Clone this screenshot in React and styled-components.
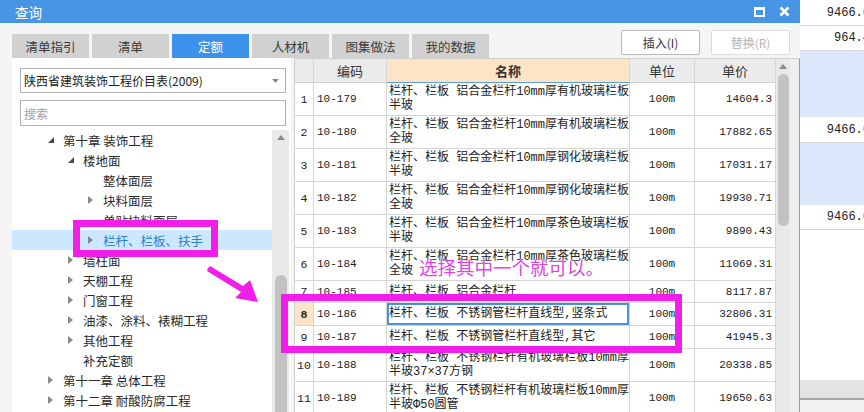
import React from 'react';
import styled, { createGlobalStyle, css } from 'styled-components';

const GlobalStyle = createGlobalStyle`
  html, body {
    margin: 0;
    padding: 0;
    overflow: hidden;
    background: #ffffff;
  }
  body {
    font-family: "Noto Sans CJK SC", "Liberation Sans", sans-serif;
  }
`;

const CJK = `"Noto Sans CJK SC", "Liberation Sans", sans-serif`;
const MONO = `"Liberation Mono", "Noto Sans CJK SC", monospace`;
const MAGENTA = '#f01ee8';

// 数据
const TREE = [
  { level: 0, label: '第十章 装饰工程', toggle: 'open' },
  { level: 1, label: '楼地面', toggle: 'open' },
  { level: 2, label: '整体面层' },
  { level: 2, label: '块料面层', toggle: 'closed' },
  { level: 2, label: '单贴块料面层' },
  { level: 2, label: '栏杆、栏板、扶手', toggle: 'closed', selected: true },
  { level: 1, label: '墙柱面', toggle: 'closed' },
  { level: 1, label: '天棚工程', toggle: 'closed' },
  { level: 1, label: '门窗工程', toggle: 'closed' },
  { level: 1, label: '油漆、涂料、裱糊工程', toggle: 'closed' },
  { level: 1, label: '其他工程', toggle: 'closed' },
  { level: 1, label: '补充定额' },
  { level: 0, label: '第十一章 总体工程', toggle: 'closed' },
  { level: 0, label: '第十二章 耐酸防腐工程', toggle: 'closed' },
];

const ROWS = [
  { code: '10-179', name: ['栏杆、栏板 铝合金栏杆10mm厚有机玻璃栏板', '半玻'], price: '14604.3' },
  { code: '10-180', name: ['栏杆、栏板 铝合金栏杆10mm厚有机玻璃栏板', '全玻'], price: '17882.65' },
  { code: '10-181', name: ['栏杆、栏板 铝合金栏杆10mm厚钢化玻璃栏板', '半玻'], price: '17031.17' },
  { code: '10-182', name: ['栏杆、栏板 铝合金栏杆10mm厚钢化玻璃栏板', '全玻'], price: '19930.71' },
  { code: '10-183', name: ['栏杆、栏板 铝合金栏杆10mm厚茶色玻璃栏板', '半玻'], price: '9890.43' },
  { code: '10-184', name: ['栏杆、栏板 铝合金栏杆10mm厚茶色玻璃栏板', '全玻'], price: '11069.31' },
  { code: '10-185', name: ['栏杆、栏板 铝合金栏杆'], price: '8117.87', height: 22 },
  { code: '10-186', name: ['栏杆、栏板 不锈钢管栏杆直线型,竖条式'], price: '32806.31', height: 23, current: true },
  { code: '10-187', name: ['栏杆、栏板 不锈钢管栏杆直线型,其它'], price: '41945.3', height: 23 },
  { code: '10-188', name: ['栏杆、栏板 不锈钢栏杆有机玻璃栏板10mm厚', '半玻37×37方钢'], price: '20338.85' },
  { code: '10-189', name: ['栏杆、栏板 不锈钢栏杆有机玻璃栏板10mm厚', '半玻Φ50圆管'], price: '19650.63' },
];

const TABS = ['清单指引', '清单', '定额', '人材机', '图集做法', '我的数据'];

// レイアウト
const Screen = styled.div`
  position: relative;
  width: 864px;
  height: 412px;
  overflow: hidden;
  display: flex;
`;

const Dialog = styled.div`
  width: 800px;
  flex-shrink: 0;
  display: flex;
  flex-direction: column;
  background: #f5f5f5;
`;

const TitleBar = styled.div`
  height: 23px;
  background: #4895e5;
  display: flex;
  align-items: center;
  padding: 0 10px 0 15px;
  color: #ffffff;
  font-family: ${CJK};
  font-size: 13.5px;
`;

const TitleIcons = styled.div`
  margin-left: auto;
  display: flex;
  align-items: center;
  gap: 14px;
`;

const MaxIcon = styled.span`
  width: 7px;
  height: 5px;
  border: 2px solid #ffffff;
  border-top-width: 3px;
`;

const Body = styled.div`
  flex: 1;
  min-height: 0;
  display: flex;
  flex-direction: column;
  padding: 7px 0 0 12px;
`;

const Toolbar = styled.div`
  height: 28px;
  display: flex;
  align-items: flex-end;
`;

const Tabs = styled.div`
  display: flex;
  gap: 3px;
`;

const Tab = styled.div`
  width: 77px;
  height: 24px;
  display: flex;
  align-items: center;
  justify-content: center;
  font-family: ${CJK};
  font-size: 12.5px;
  background: ${(p) => (p.active ? '#3d92ec' : '#d1d1d1')};
  color: ${(p) => (p.active ? '#ffffff' : '#3a3a3a')};
`;

const Buttons = styled.div`
  margin-left: auto;
  margin-right: 10px;
  align-self: flex-start;
  display: flex;
  gap: 11px;
`;

const Button = styled.div`
  width: 77px;
  height: 23px;
  display: flex;
  align-items: center;
  justify-content: center;
  background: #ffffff;
  border: 1px solid ${(p) => (p.disabled ? '#dcdcdc' : '#b9b9b9')};
  border-radius: 2px;
  font-family: ${CJK};
  font-size: 12px;
  color: ${(p) => (p.disabled ? '#b4b4b4' : '#333333')};
`;

const Content = styled.div`
  flex: 1;
  min-height: 0;
  display: flex;
  gap: 3px;
`;

// 左側ツリー
const LeftPanel = styled.div`
  width: 280px;
  background: #ffffff;
  display: flex;
  flex-direction: column;
  padding-top: 10px;
`;

const Field = styled.div`
  margin: 0 5px 0 8px;
  height: ${(p) => (p.tall ? 24 : 23)}px;
  border: 1px solid #b4b4b4;
  display: flex;
  align-items: center;
  padding: 0 6px 0 3px;
  font-family: ${CJK};
  font-size: 12px;
  color: ${(p) => (p.placeholder ? '#a0a0a0' : '#222222')};
  & + & {
    margin-top: 7px;
  }
`;

const Caret = styled.svg`
  margin-left: auto;
`;

const TreeArea = styled.div`
  flex: 1;
  min-height: 0;
  margin-top: 4px;
  display: flex;
  padding-right: 2px;
`;

const TreeList = styled.div`
  flex: 1;
  display: flex;
  flex-direction: column;
`;

const TreeRow = styled.div`
  height: 20px;
  flex-shrink: 0;
  display: flex;
  align-items: center;
  padding-left: ${(p) => 36 + p.level * 20}px;
  font-family: ${CJK};
  font-size: 12.5px;
  white-space: nowrap;
  color: ${(p) => (p.selected ? '#2f7fd2' : '#2a2a2a')};
  background: ${(p) => (p.selected ? '#cce8ff' : 'transparent')};
`;

const Toggle = styled.span`
  width: 15px;
  flex-shrink: 0;
  display: flex;
  align-items: center;
`;

const VScroll = styled.div`
  width: ${(p) => p.width}px;
  flex-shrink: 0;
  background: #e9e9e9;
  display: flex;
  flex-direction: column;
  align-items: center;
`;

const ScrollArrow = styled.div`
  height: 14px;
  flex-shrink: 0;
  display: flex;
  align-items: center;
  justify-content: center;
`;

const Thumb = styled.div`
  width: ${(p) => p.width}px;
  margin-top: ${(p) => p.offset}px;
  height: ${(p) => p.length}px;
  flex-shrink: 0;
  background: #c2c2c2;
  border-radius: 6px;
`;

// 右側テーブル
const TablePanel = styled.div`
  flex: 1;
  display: flex;
  border-top: 1px solid #cfcfcf;
  background: #ffffff;
`;

const Grid = styled.div`
  width: 481px;
  display: flex;
  flex-direction: column;
  border-left: 1px solid #cfcfcf;
`;

const Row = styled.div`
  display: grid;
  grid-template-columns: 19px 73px 243px 65px 81px;
  height: ${(p) => p.height}px;
  flex-shrink: 0;
`;

const Cell = styled.div`
  border-right: 1px solid #d6d6d6;
  border-bottom: 1px solid #d6d6d6;
  display: flex;
  align-items: center;
  overflow: hidden;
  white-space: nowrap;
  font-family: ${MONO};
  font-size: 11px;
  color: #222222;
  ${(p) => p.align === 'center' && css`justify-content: center;`}
  ${(p) => p.align === 'right' && css`justify-content: flex-end; padding-right: 3px;`}
  ${(p) => p.align === 'left' && css`padding-left: 3px;`}
`;

const HeadCell = styled(Cell)`
  justify-content: center;
  font-family: ${CJK};
  font-size: 13px;
  color: #333333;
  background: ${(p) => (p.accent ? '#fde4c6' : '#ebebeb')};
  font-weight: ${(p) => (p.accent ? 700 : 400)};
  border-bottom: 1px solid ${(p) => (p.accent ? '#5a9be0' : '#cfcfcf')};
`;

const NumCell = styled(Cell)`
  justify-content: center;
  background: ${(p) => (p.current ? '#fde4c6' : '#ffffff')};
  font-weight: ${(p) => (p.current ? 700 : 400)};
  font-size: 11.5px;
`;

const NameCell = styled(Cell)`
  flex-direction: column;
  align-items: flex-start;
  justify-content: ${(p) => (p.lines > 1 ? 'flex-start' : 'center')};
  padding: ${(p) => (p.lines > 1 ? '2px 0 0 2px' : '0 0 0 2px')};
  font-size: 12px;
  line-height: 14px;
  ${(p) => p.current && css`box-shadow: inset 0 0 0 2px #4a90e0;`}
`;

const Strip = styled.div`
  width: 9px;
  background: #efefef;
  border-right: 1px solid #9c9c9c;
`;

// 背景のアプリ
const Backdrop = styled.div`
  flex: 1;
  display: flex;
  flex-direction: column;
  background: #ffffff;
`;

const BgCell = styled.div`
  height: ${(p) => p.height}px;
  flex-shrink: 0;
  display: flex;
  align-items: center;
  justify-content: flex-end;
  margin-right: -6px;
  border-bottom: 1px solid #d8d8d8;
  font-family: ${MONO};
  font-size: 12px;
  color: #222222;
`;

const BgBand = styled.div`
  height: ${(p) => p.height}px;
  flex-shrink: 0;
  background: ${(p) => p.color || '#dbe8fb'};
  border-bottom: ${(p) => (p.line ? `${p.line}px solid #a6a6a6` : 'none')};
`;

const BgFill = styled.div`
  flex: 1;
  background: ${(p) => p.color || '#ffffff'};
`;

// 注釈
const Overlay = styled.div`
  position: absolute;
  inset: 0;
  pointer-events: none;
`;

const MarkBox = styled.div`
  position: absolute;
  left: ${(p) => p.x}px;
  top: ${(p) => p.y}px;
  width: ${(p) => p.w}px;
  height: ${(p) => p.h}px;
  box-sizing: border-box;
  border: 7px solid ${MAGENTA};
`;

const Note = styled.div`
  position: absolute;
  left: 419px;
  top: 254px;
  font-family: ${CJK};
  font-size: 18.5px;
  color: #dc45e2;
  white-space: nowrap;
  text-shadow: 0 0 2px #ffffff, 0 0 1px #ffffff;
`;

const ArrowSvg = styled.svg`
  position: absolute;
  left: 200px;
  top: 260px;
`;

const UpTriangle = () => (
  <svg width="8" height="5" viewBox="0 0 8 5">
    <polygon points="0,5 4,0 8,5" fill="#8a8a8a" />
  </svg>
);

const TreeToggle = ({ type }) => {
  if (type === 'open') {
    return (
      <svg width="7" height="7" viewBox="0 0 7 7">
        <polygon points="6,0 6,6 0,6" fill="#4a4a4a" />
      </svg>
    );
  }
  if (type === 'closed') {
    return (
      <svg width="5" height="8" viewBox="0 0 5 8">
        <polygon points="0,0 5,4 0,8" fill="#8a8a8a" />
      </svg>
    );
  }
  return null;
};

export default function App() {
  return (
    <>
      <GlobalStyle />
      <Screen>
        <Dialog>
          <TitleBar>
            查询
            <TitleIcons>
              <MaxIcon />
              <svg width="11" height="11" viewBox="0 0 11 11">
                <path d="M1.5 1.5 L9.5 9.5 M9.5 1.5 L1.5 9.5" stroke="#ffffff" strokeWidth="2.6" />
              </svg>
            </TitleIcons>
          </TitleBar>
          <Body>
            <Toolbar>
              <Tabs>
                {TABS.map((t) => (
                  <Tab key={t} active={t === '定额'}>{t}</Tab>
                ))}
              </Tabs>
              <Buttons>
                <Button>插入(I)</Button>
                <Button disabled>替换(R)</Button>
              </Buttons>
            </Toolbar>
            <Content>
              <LeftPanel>
                <Field>
                  陕西省建筑装饰工程价目表(2009)
                  <Caret width="7" height="4" viewBox="0 0 7 4">
                    <polygon points="0,0 7,0 3.5,4" fill="#8c8c8c" />
                  </Caret>
                </Field>
                <Field tall placeholder>搜索</Field>
                <TreeArea>
                  <TreeList>
                    {TREE.map((node) => (
                      <TreeRow key={node.label} level={node.level} selected={node.selected}>
                        <Toggle>
                          <TreeToggle type={node.toggle} />
                        </Toggle>
                        {node.label}
                      </TreeRow>
                    ))}
                  </TreeList>
                  <VScroll width={17}>
                    <ScrollArrow><UpTriangle /></ScrollArrow>
                    <Thumb width={12} offset={131} length={200} />
                  </VScroll>
                </TreeArea>
              </LeftPanel>

              <TablePanel>
                <Grid>
                  <Row height={24}>
                    <HeadCell />
                    <HeadCell>编码</HeadCell>
                    <HeadCell accent>名称</HeadCell>
                    <HeadCell>单位</HeadCell>
                    <HeadCell>单价</HeadCell>
                  </Row>
                  {ROWS.map((r, i) => (
                    <Row key={r.code} height={r.height || 33}>
                      <NumCell current={r.current}>{i + 1}</NumCell>
                      <Cell align="left">{r.code}</Cell>
                      <NameCell lines={r.name.length} current={r.current}>
                        {r.name.map((line) => (
                          <span key={line}>{line}</span>
                        ))}
                      </NameCell>
                      <Cell align="center">100m</Cell>
                      <Cell align="right">{r.price}</Cell>
                    </Row>
                  ))}
                </Grid>
                <VScroll width={14}>
                  <ScrollArrow><UpTriangle /></ScrollArrow>
                  <Thumb width={11} offset={1} length={152} />
                </VScroll>
                <Strip />
              </TablePanel>
            </Content>
          </Body>
        </Dialog>

        <Backdrop>
          <BgCell height={25}>9466.6</BgCell>
          <BgCell height={24}>964.4</BgCell>
          <BgBand height={66} />
          <BgCell height={25}>9466.6</BgCell>
          <BgBand height={62} />
          <BgCell height={24}>9466.6</BgCell>
          <BgFill />
          <BgBand height={18} color="#e3e3e3" line={2} />
          <BgBand height={12} color="#f2f2f2" />
        </Backdrop>

        <Overlay>
          <MarkBox x={73} y={220} w={145} h={37} />
          <MarkBox x={281} y={294} w={401} h={59} />
          <ArrowSvg width="64" height="46" viewBox="0 0 64 46">
            <polygon
              points="8,8 10,6 43,26 50,20 58,42 35,38 41,32 7,11"
              fill={MAGENTA}
            />
          </ArrowSvg>
          <Note>选择其中一个就可以。</Note>
        </Overlay>
      </Screen>
    </>
  );
}
